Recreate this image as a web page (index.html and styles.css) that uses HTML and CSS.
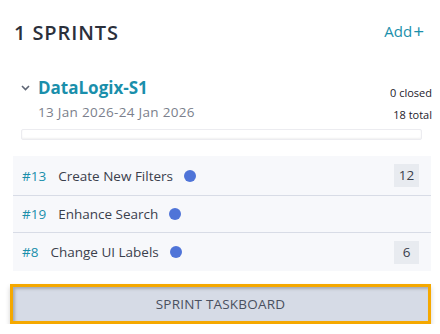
FILE: index.html
```html
<!DOCTYPE html>
<html lang="en">
<head>
    <meta charset="UTF-8">
    <meta name="viewport" content="width=device-width, initial-scale=1.0">
    <title>Sprints</title>
    <link rel="stylesheet" href="styles.css">
</head>
<body>
    <div class="panel">
        <header class="panel-head">
            <h1>1 SPRINTS</h1>
            <a class="add-link" href="#">Add<span class="plus">+</span></a>
        </header>

        <!-- sprint card -->
        <section class="sprint">
            <div class="sprint-top">
                <div class="sprint-info">
                    <div class="sprint-name">
                        <svg class="chevron" width="9" height="6" viewBox="0 0 9 6"><path d="M1 1l3.5 3.5L8 1" fill="none" stroke="#5f6675" stroke-width="1.6"/></svg>
                        <span>DataLogix-S1</span>
                    </div>
                    <div class="sprint-dates">13 Jan 2026-24 Jan 2026</div>
                </div>
                <div class="sprint-stats">
                    <div>0 closed</div>
                    <div>18 total</div>
                </div>
            </div>
            <div class="progress"></div>
        </section>

        <ul class="tasks">
            <li class="task">
                <span class="task-id">#13</span>
                <span class="task-title">Create New Filters</span>
                <span class="dot"></span>
                <span class="points">12</span>
            </li>
            <li class="task">
                <span class="task-id">#19</span>
                <span class="task-title">Enhance Search</span>
                <span class="dot"></span>
            </li>
            <li class="task">
                <span class="task-id">#8</span>
                <span class="task-title">Change UI Labels</span>
                <span class="dot"></span>
                <span class="points">6</span>
            </li>
        </ul>

        <button class="taskboard">SPRINT TASKBOARD</button>
    </div>
</body>
</html>
```

FILE: styles.css
```css
body {
    margin: 0;
    font-family: 'Open Sans', 'Noto Sans', sans-serif;
    background: #ffffff;
    color: #2e3440;
}

.panel {
    padding: 0 9px 0 13px;
}

.panel-head {
    display: flex;
    justify-content: space-between;
    align-items: center;
    padding: 17px 7px 0 1px;
    height: 30px;
}

.panel-head h1 {
    margin: 0;
    font-size: 20px;
    font-weight: 600;
    color: #2b303b;
    letter-spacing: 0.9px;
}

.add-link {
    color: #1a8fab;
    text-decoration: none;
    font-size: 15px;
    margin-top: -4px;
}

.add-link .plus {
    font-size: 19px;
    margin-left: 1px;
    position: relative;
    top: 1px;
}

.sprint {
    padding: 29px 0 0 8px;
}

.sprint-top {
    display: flex;
    justify-content: space-between;
}

.sprint-name {
    display: flex;
    align-items: center;
    gap: 8px;
    font-size: 17px;
    font-weight: 700;
    color: #1a8fab;
    height: 22px;
}

.chevron {
    margin-top: 1px;
}

.sprint-dates {
    margin: 5px 0 0 17px;
    font-size: 13.5px;
    color: #7b7f8c;
    letter-spacing: 0.3px;
}

.sprint-stats {
    text-align: right;
    font-size: 11px;
    color: #1d212a;
    line-height: 22px;
    padding-top: 6px;
    margin-right: -1px;
}

.progress {
    margin: 3px 9px 0 0;
    height: 9px;
    border: 1px solid #ececf0;
    border-radius: 2px;
    box-shadow: inset 0 -1px 2px rgba(0, 0, 0, 0.06);
}

.tasks {
    list-style: none;
    margin: 16px 0 0;
    padding: 0;
    background: #f7f8fb;
}

.task {
    display: flex;
    align-items: center;
    padding: 0 12px 0 9px;
    height: 36px;
    font-size: 13.5px;
    border-bottom: 1px solid #d8dce6;
}

.task:first-child {
    height: 39px;
}

.task:last-child {
    border-bottom: none;
    height: 38px;
}

.task-id {
    color: #1a8fab;
    margin-right: 12px;
}

.task-title {
    color: #3b404c;
}

.dot {
    width: 12px;
    height: 12px;
    border-radius: 50%;
    background: #4f74d8;
    margin-left: 11px;
}

.points {
    margin-left: auto;
    background: #e8ebf0;
    min-width: 25px;
    height: 23px;
    line-height: 23px;
    text-align: center;
    color: #3b404c;
}

.taskboard {
    display: block;
    width: calc(100% + 3px);
    margin: 13px 0 0 -3px;
    height: 40px;
    border: 3px solid #f5a800;
    background: #d6dbe6;
    box-shadow: inset 2px 2px 3px rgba(0, 0, 0, 0.22), 0 3px 5px rgba(0, 0, 0, 0.18);
    font-family: inherit;
    font-size: 13.5px;
    color: #4a5060;
    letter-spacing: 0.2px;
}
```
